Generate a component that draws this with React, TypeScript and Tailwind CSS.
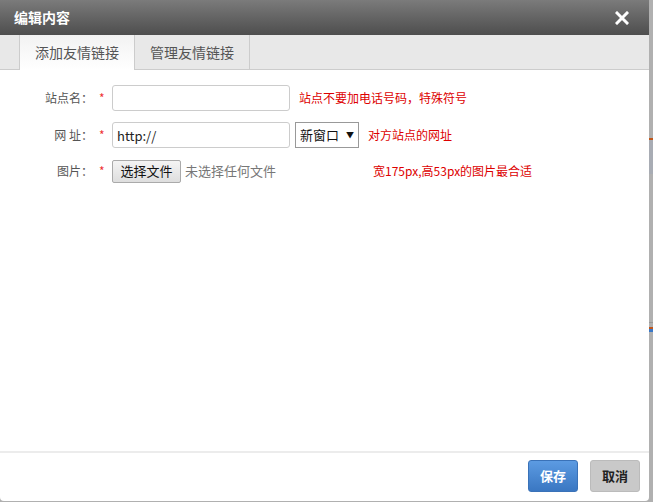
import React from 'react';

const font = { fontFamily: '"Microsoft YaHei", "Noto Sans CJK SC", "Liberation Sans", sans-serif' };

export default function App() {
    return (
        <div className="flex w-[653px] h-[502px] bg-[#b0b0b0] overflow-hidden" style={font}>
            <div className="flex flex-col w-[649px] h-[501px] bg-white rounded-b-[4px] overflow-hidden">
                {/* header */}
                <div className="flex items-center justify-between h-[35px] px-[14px] bg-gradient-to-b from-[#7b7b7b] to-[#4e4e4e]">
                    <span className="text-white text-[14px] font-bold">编辑内容</span>
                    <svg width="14" height="14" viewBox="0 0 14 14" className="mr-[6px]">
                        <path d="M2 2L12 12M12 2L2 12" stroke="#fff" strokeWidth="3" strokeLinecap="square" />
                    </svg>
                </div>

                {/* tabs */}
                <div className="flex h-[35px] bg-[#e8e8e8] border-b border-[#cccccc] pl-[19px]">
                    <div className="flex items-center justify-center w-[116px] h-[35px] bg-gradient-to-b from-[#f2f2f2] to-white border-l border-r border-[#cccccc] text-[14px] text-[#555]">
                        添加友情链接
                    </div>
                    <div className="flex items-center justify-center w-[115px] h-[34px] border-r border-[#cccccc] text-[14px] text-[#555]">
                        管理友情链接
                    </div>
                </div>

                {/* form */}
                <div className="flex-1 flex flex-col gap-[11px] pt-[15px] text-[12px]">
                    <div className="flex items-center h-[26px]">
                        <label className="w-[93px] text-right text-[#555]">站点名：</label>
                        <span className="w-[19px] pl-[6px] text-[#e33]">*</span>
                        <input className="w-[178px] h-[26px] border border-[#ccc] rounded-[3px] px-[3px] text-[13px]" />
                        <span className="ml-[9px] text-[#d00]">站点不要加电话号码，特殊符号</span>
                    </div>
                    <div className="flex items-center h-[26px]">
                        <label className="w-[93px] text-right text-[#555]">网 址：</label>
                        <span className="w-[19px] pl-[6px] text-[#e33]">*</span>
                        <input defaultValue="http://" className="w-[178px] h-[26px] border border-[#ccc] rounded-[3px] px-[4px] text-[13px] text-[#222]" />
                        <div className="flex items-center justify-between ml-[5px] w-[64px] h-[26px] border border-[#999] px-[4px] text-[13px] text-[#111]">
                            <span>新窗口</span>
                            <span className="text-[8px]">▼</span>
                        </div>
                        <span className="ml-[9px] text-[#d00]">对方站点的网址</span>
                    </div>
                    <div className="flex items-center h-[24px]">
                        <label className="w-[93px] text-right text-[#555]">图片：</label>
                        <span className="w-[19px] pl-[6px] text-[#e33]">*</span>
                        <div className="flex items-center justify-center w-[69px] h-[23px] border border-[#aaa] rounded-[2px] bg-gradient-to-b from-[#f4f4f4] to-[#dedede] text-[13px] text-[#111]">
                            选择文件
                        </div>
                        <span className="ml-[4px] text-[13px] text-[#777]">未选择任何文件</span>
                        <span className="ml-[97px] text-[#d00]">宽175px,高53px的图片最合适</span>
                    </div>
                </div>

                {/* footer */}
                <div className="flex items-center justify-end gap-[12px] h-[50px] border-t-2 border-[#ececec] pr-[9px] pb-[2px]">
                    <div className="flex items-center justify-center w-[50px] h-[32px] rounded-[3px] border border-[#3a72b8] bg-gradient-to-b from-[#5c9be2] to-[#3a77c2] text-white text-[13px] font-bold">
                        保存
                    </div>
                    <div className="flex items-center justify-center w-[50px] h-[32px] rounded-[3px] border border-[#bbb] bg-[#c9c9c9] text-[#222] text-[13px] font-bold">
                        取消
                    </div>
                </div>
            </div>
            <div className="flex flex-col w-[4px]">
                <div className="h-[138px]" />
                <div className="h-[2px] bg-[#c0561a]" />
                <div className="h-[34px] bg-[#a8acb4]" />
                <div className="h-[148px]" />
                <div className="h-[1px] bg-[#999]" />
                <div className="h-[4px]" />
                <div className="h-[2px] bg-[#c0561a]" />
                <div className="h-[3px] bg-[#3a78c8]" />
            </div>
        </div>
    );
}
